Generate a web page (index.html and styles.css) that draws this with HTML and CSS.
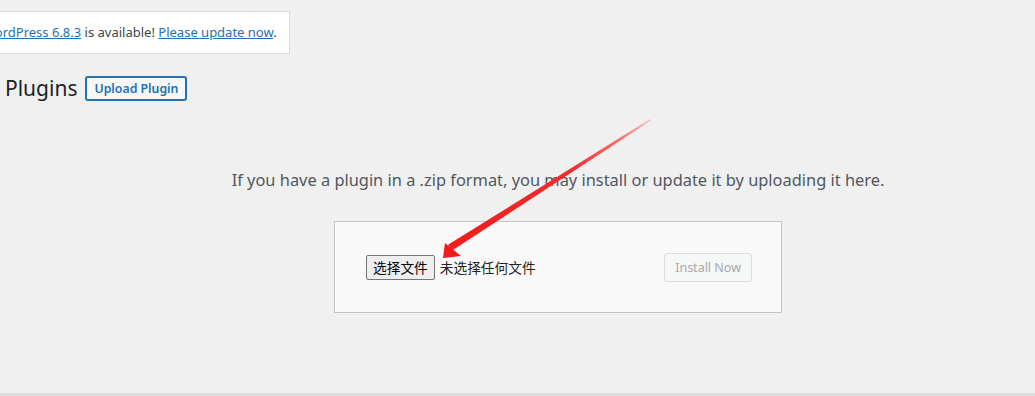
FILE: index.html
```html
<!DOCTYPE html>
<html lang="en">
<head>
    <meta charset="UTF-8">
    <title>Add Plugins</title>
    <link rel="stylesheet" href="styles.css">
</head>
<body>
<div id="page">
    <div class="update-nag">
        <a href="#">WordPress 6.8.3</a> is available! <a href="#">Please update now</a>.
    </div>
    <div class="wrap">
        <div class="title-row">
            <h1>Plugins</h1>
            <span class="upload-btn">Upload Plugin</span>
        </div>
        <p class="install-help">If you have a plugin in a .zip format, you may install or update it by uploading it here.</p>
        <div class="upload-form">
            <div class="file-field">
                <span class="file-btn">选择文件</span>
                <span class="file-name">未选择任何文件</span>
            </div>
            <span class="install-btn">Install Now</span>
        </div>
    </div>
    <div class="footer-line"></div>

    <svg class="arrow" width="1035" height="396" viewBox="0 0 1035 396">
        <defs>
            <linearGradient id="fade" x1="650" y1="119" x2="450" y2="248" gradientUnits="userSpaceOnUse">
                <stop offset="0" stop-color="#ffc4c4"/>
                <stop offset="0.15" stop-color="#ff6a6a"/>
                <stop offset="0.4" stop-color="#f62a2a"/>
                <stop offset="1" stop-color="#f21b1b"/>
            </linearGradient>
        </defs>
        <polygon points="650,119 651,120.5 452,250.6 448,244.8" fill="url(#fade)"/>
        <polygon points="443,258 445,243 461,256" fill="#f21b1b"/>
    </svg>
</div>
</body>
</html>
```
FILE: styles.css
```css
*{
    margin: 0;
    padding: 0;
    box-sizing: border-box;
}
html, body{
    width: 1035px;
    height: 396px;
    overflow: hidden;
}
body{
    background: #f0f0f1;
    font-family: "Noto Sans", "Open Sans", sans-serif;
    color: #3c434a;
}
#page{
    position: relative;
    height: 396px;
    display: flex;
    flex-direction: column;
}
a{
    color: #2271b1;
}
.update-nag{
    align-self: flex-start;
    margin: 11px 0 0 -34px;
    height: 43px;
    padding: 0 12px 0 16px;
    background: #fff;
    border: 1px solid #dcdcde;
    font-size: 13px;
    line-height: 41px;
    color: #3c434a;
}
.wrap{
    flex: 1;
}
.title-row{
    display: flex;
    align-items: center;
    margin: 21px 0 0 5px;
    gap: 8px;
}
h1{
    font-size: 21px;
    font-weight: 400;
    color: #1d2327;
    line-height: 26px;
}
.upload-btn{
    border: 2px solid #2271b1;
    border-radius: 3px;
    background: #f6f7f7;
    color: #2271b1;
    font-size: 12.3px;
    font-weight: 600;
    line-height: 21px;
    padding: 0 7px;
}
.install-help{
    text-align: center;
    font-size: 16.4px;
    color: #50575e;
    margin: 67px 0 0 81px;
}
.upload-form{
    width: 448px;
    height: 92px;
    margin: 30px 0 0 334px;
    background: #f9f9f9;
    border: 1px solid #c3c4c7;
    display: flex;
    align-items: center;
    justify-content: space-between;
    padding: 0 29px 0 31px;
}
.file-field{
    display: flex;
    align-items: center;
    gap: 5px;
    font-family: "Noto Sans CJK SC", sans-serif;
    font-size: 13.7px;
}
.file-btn{
    background: #efefef;
    border: 1px solid #767676;
    border-radius: 2px;
    padding: 0 6px;
    line-height: 23px;
    color: #000;
}
.file-name{
    color: #222;
}
.install-btn{
    border: 1px solid #dcdcde;
    border-radius: 3px;
    background: #f6f7f7;
    color: #a7aaad;
    font-size: 12.5px;
    line-height: 27px;
    padding: 0 10px;
}
.footer-line{
    height: 3px;
    background: #dcdcde;
}
.arrow{
    position: absolute;
    left: 0;
    top: 0;
    pointer-events: none;
}
```
